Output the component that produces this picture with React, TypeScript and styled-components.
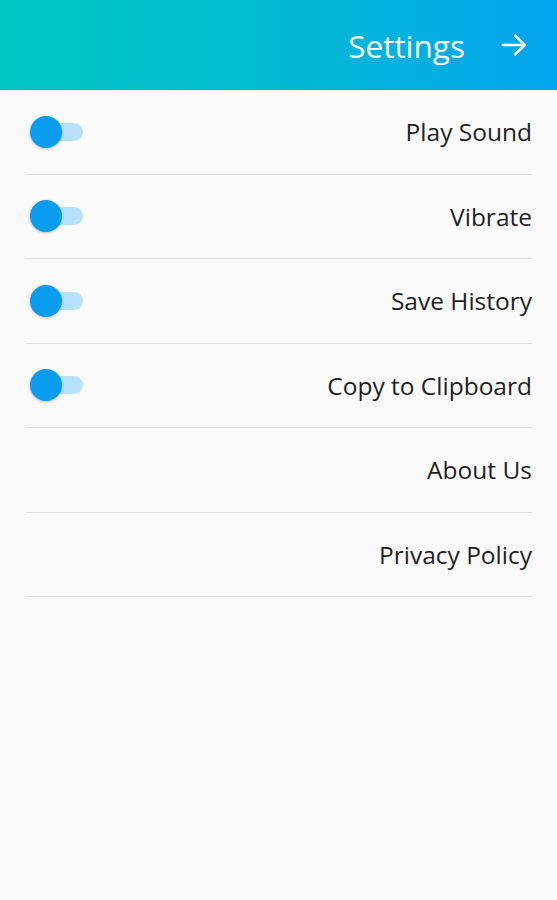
import React from 'react'
import styled, { createGlobalStyle } from 'styled-components'

const GlobalStyle = createGlobalStyle`
  html, body {
    margin: 0;
    padding: 0;
    background: #fafafa;
  }
  body {
    font-family: 'Open Sans', 'Noto Sans', sans-serif;
  }
`

const Page = styled.div`
  width: 557px;
  min-height: 900px;
  background: #fafafa;
`

const Header = styled.header`
  height: 90px;
  display: flex;
  align-items: center;
  justify-content: flex-end;
  gap: 34px;
  padding-right: 28px;
  box-sizing: border-box;
  background: linear-gradient(90deg, #00c6c3 0%, #00bdd0 45%, #04a4ef 100%);
  color: #fff;
`

const Title = styled.h1`
  margin: 0;
  font-size: 31.5px;
  font-weight: 400;
`

const List = styled.div`
  padding: 0 25px 0 26px;
`

const Row = styled.div`
  height: 84.5px;
  display: flex;
  align-items: center;
  justify-content: space-between;
  border-bottom: 1px solid #dedede;
  box-sizing: border-box;
`

const Label = styled.span`
  margin-left: auto;
  font-size: 24.5px;
  color: #1f1f1f;
`

const Track = styled.div`
  position: relative;
  width: 52px;
  height: 18px;
  margin-left: 5px;
  border-radius: 9px;
  background: #b5e1fb;
`

const Thumb = styled.div<{ on?: boolean }>`
  position: absolute;
  top: -7px;
  left: ${({ on }) => (on ? '21px' : '-1px')};
  width: 32px;
  height: 32px;
  border-radius: 50%;
  background: #0a9cee;
  box-shadow: 0 1px 3px rgba(0, 0, 0, 0.25);
`

const Arrow = () => (
  <svg width="30" height="30" viewBox="0 0 24 24" fill="none" stroke="#fff" strokeWidth="2.1" strokeLinecap="round" strokeLinejoin="round">
    <path d="M3 12h17.5" />
    <path d="M13 4.5l7.5 7.5-7.5 7.5" />
  </svg>
)

const Toggle = () => (
  <Track>
    <Thumb />
  </Track>
)

const items = [
  { label: 'Play Sound', toggle: true },
  { label: 'Vibrate', toggle: true },
  { label: 'Save History', toggle: true },
  { label: 'Copy to Clipboard', toggle: true },
  { label: 'About Us', toggle: false },
  { label: 'Privacy Policy', toggle: false },
]

const App = () => (
  <>
    <GlobalStyle />
    <Page>
      <Header>
        <Title>Settings</Title>
        <Arrow />
      </Header>
      <List>
        {items.map((it) => (
          <Row key={it.label}>
            {it.toggle && <Toggle />}
            <Label>{it.label}</Label>
          </Row>
        ))}
      </List>
    </Page>
  </>
)

export default App
